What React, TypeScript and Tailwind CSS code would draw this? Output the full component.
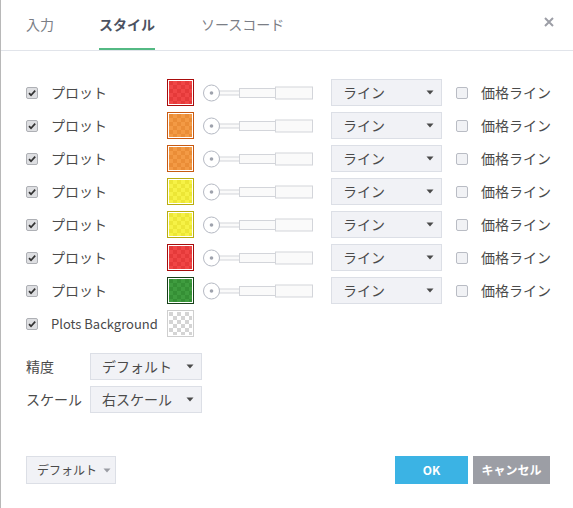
import React from 'react';

const FONT = "font-['Noto_Sans_CJK_JP','Noto_Sans',sans-serif]";

type Swatch = { fill: string; alt: string; border: string };

const RED: Swatch = { fill: '#f04646', alt: '#e53a3a', border: '#a80c0c' };
const ORANGE: Swatch = { fill: '#f39a45', alt: '#ea8d37', border: '#c85a12' };
const YELLOW: Swatch = { fill: '#f6f246', alt: '#ece636', border: '#b9ad10' };
const GREEN: Swatch = { fill: '#3f9c3f', alt: '#358f35', border: '#163f18' };
const GREY: Swatch = { fill: '#ffffff', alt: '#d4d4d4', border: '#cfcfcf' };

const ROWS: Swatch[] = [RED, ORANGE, ORANGE, YELLOW, YELLOW, RED, GREEN];

function CheckBox({ checked }: { checked?: boolean }) {
  if (!checked) {
    return <div className="w-[12px] h-[12px] rounded-[2px] border border-[#b9bcc4] bg-[#f1f2f5]" />;
  }
  return (
    <div className="w-[12px] h-[12px] rounded-[2px] border border-[#aeb0b5] bg-[#dedfe2] flex items-center justify-center">
      <svg width="10" height="10" viewBox="0 0 10 10">
        <path d="M2 5.2 L4 7.2 L8.2 2.6" fill="none" stroke="#333" strokeWidth="1.7" />
      </svg>
    </div>
  );
}

function ColorBox({ c, id }: { c: Swatch; id: string }) {
  return (
    <div className="w-[27px] h-[27px] p-px bg-white" style={{ border: `1px solid ${c.border}` }}>
      <svg width="23" height="23" viewBox="0 0 23 23" className="block">
        <defs>
          <pattern id={id} width="8" height="8" patternUnits="userSpaceOnUse">
            <rect width="8" height="8" fill={c.fill} />
            <rect width="4" height="4" fill={c.alt} />
            <rect x="4" y="4" width="4" height="4" fill={c.alt} />
          </pattern>
        </defs>
        <rect width="23" height="23" fill={`url(#${id})`} />
      </svg>
    </div>
  );
}

function Slider() {
  return (
    <svg width="112" height="22" viewBox="0 0 112 22" className="block">
      <rect x="16" y="9" width="21" height="4" fill="#fafafa" stroke="#d3d5da" />
      <rect x="36.5" y="6.5" width="36" height="9" fill="#fafafa" stroke="#d3d5da" />
      <rect x="72.5" y="5" width="37" height="12" fill="#fafafa" stroke="#d3d5da" />
      <circle cx="8.5" cy="11" r="8" fill="#fff" stroke="#b5b9c3" />
      <circle cx="8.5" cy="11" r="1.8" fill="#9fa3ad" />
    </svg>
  );
}

function Caret({ color = '#4a4a4a' }: { color?: string }) {
  return (
    <svg width="8" height="5" viewBox="0 0 8 5">
      <path d="M0.5 0.5 L7.5 0.5 L4 4.5 Z" fill={color} />
    </svg>
  );
}

function Select({ label, w }: { label: string; w: string }) {
  return (
    <div className={`${w} h-[27px] bg-[#f1f2f6] border border-[#dcdfe6] flex items-center justify-between pl-[11px] pr-[7px] text-[14px] text-[#4a4a4a]`}>
      <span>{label}</span>
      <Caret />
    </div>
  );
}

export default function App() {
  return (
    <div className={`w-[573px] h-[508px] bg-white border-l border-[#b8b8b8] flex flex-col ${FONT}`}>
      <div className="h-[51px] border-b border-[#e1e4ea] flex items-stretch pl-[25px] pr-[19px]">
        <div className="flex items-center border-b-2 border-transparent text-[14px] text-[#7b7e86]">入力</div>
        <div className="flex items-center border-b-2 border-[#53b983] ml-[45px] text-[14px] font-bold text-[#4c5261]">スタイル</div>
        <div className="flex items-center border-b-2 border-transparent ml-[46px] text-[14px] text-[#7b7e86]">ソースコード</div>
        <div className="ml-auto flex items-center pb-[6px]">
          <svg width="10" height="10" viewBox="0 0 10 10">
            <path d="M1 1 L9 9 M9 1 L1 9" stroke="#9c9ea6" strokeWidth="2" />
          </svg>
        </div>
      </div>

      <div className="pt-[25px] pl-[25px] flex flex-col text-[14px] text-[#4a4a4a]">
        {ROWS.map((c, i) => (
          <div key={i} className="h-[33px] flex items-center">
            <CheckBox checked />
            <span className="ml-[13px] w-[116px]">プロット</span>
            <ColorBox c={c} id={`sw${i}`} />
            <div className="ml-[9px]">
              <Slider />
            </div>
            <div className="ml-[16px]">
              <Select label="ライン" w="w-[111px]" />
            </div>
            <div className="ml-[14px]">
              <CheckBox />
            </div>
            <span className="ml-[13px]">価格ライン</span>
          </div>
        ))}
        <div className="h-[33px] flex items-center">
          <CheckBox checked />
          <span className="ml-[13px] w-[116px] text-[13px]">Plots Background</span>
          <ColorBox c={GREY} id="swbg" />
        </div>

        <div className="mt-[10px] h-[33px] flex items-center">
          <span className="w-[64px]">精度</span>
          <Select label="デフォルト" w="w-[112px]" />
        </div>
        <div className="h-[33px] flex items-center">
          <span className="w-[64px]">スケール</span>
          <Select label="右スケール" w="w-[112px]" />
        </div>
      </div>

      <div className="mt-auto pb-[24px] pl-[25px] pr-[23px] flex items-center">
        <div className="h-[28px] w-[90px] bg-[#f1f2f6] border border-[#dcdfe6] flex items-center pl-[10px] gap-[6px] text-[12px] text-[#4a4a4a]">
          <span>デフォルト</span>
          <Caret color="#9a9ca3" />
        </div>
        <div className="ml-auto h-[28px] w-[73px] bg-[#3bb3e4] flex items-center justify-center text-[12px] font-bold text-white">
          OK
        </div>
        <div className="ml-[5px] h-[28px] w-[77px] bg-[#9c9ea5] flex items-center justify-center text-[12px] font-bold text-white">
          キャンセル
        </div>
      </div>
    </div>
  );
}
